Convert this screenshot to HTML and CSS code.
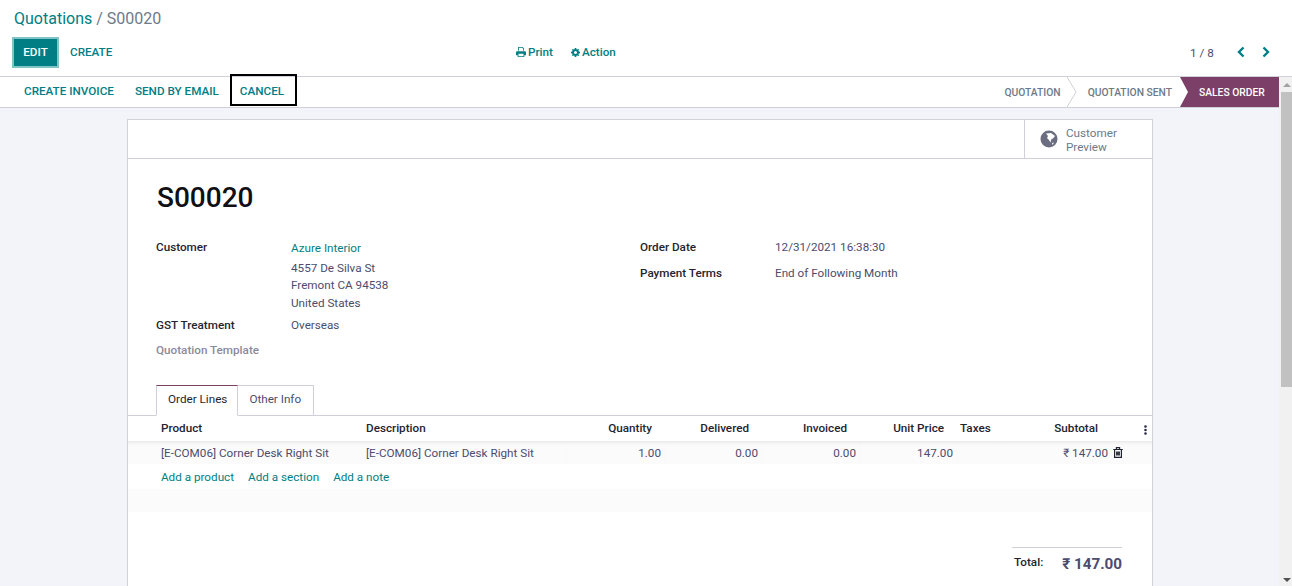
FILE: index.html
```html
<!DOCTYPE html>
<html lang="en">
<head>
    <meta charset="UTF-8">
    <title>Quotations / S00020</title>
    <link rel="stylesheet" href="styles.css">
</head>
<body>
    <header class="control-panel">
        <div class="breadcrumb"><a class="link">Quotations</a> <span class="crumb-sep">/</span> <span class="crumb-active">S00020</span></div>
        <div class="cp-row">
            <div class="cp-buttons">
                <button class="btn btn-primary">EDIT</button>
                <button class="btn btn-plain">CREATE</button>
            </div>
            <div class="cp-actions">
                <span class="cp-action">
                    <svg class="icon" viewBox="0 0 12 12" width="10" height="10"><path fill="#017e84" d="M2.500 0h5.500l1.500 1.500v3h-1V2.300L7.600 1H3.500v3.500h-1zM1.500 5h9A1.500 1.500 0 0 1 12 6.500V10h-2v2H2v-2H0V6.500A1.500 1.500 0 0 1 1.500 5zM3 8v3h6V8z"/></svg>
                    Print
                </span>
                <span class="cp-action">
                    <svg class="icon" viewBox="0 0 12 12" width="9" height="9"><path fill="#017e84" fill-rule="evenodd" d="M5 0h2l.3 1.600 1.100.5L9.800 1.200l1 1-.9 1.400.5 1.100L12 5v2l-1.600.3-.5 1.100.9 1.400-1 1-1.400-.9-1.100.5L7 12H5l-.3-1.600-1.100-.5-1.400.9-1-1 .9-1.400-.5-1.100L0 7V5l1.600-.3.500-1.100-.9-1.400 1-1 1.400.9 1.100-.5zM6 4a2 2 0 1 0 0 4 2 2 0 0 0 0-4z"/></svg>
                    Action
                </span>
            </div>
            <div class="pager">
                <span class="pager-count">1 / 8</span>
                <svg class="pager-arrow" viewBox="0 0 10 12" width="10" height="12"><path d="M7.500 1.500 3 6l4.500 4.500" /></svg>
                <svg class="pager-arrow" viewBox="0 0 10 12" width="10" height="12"><path d="M2.500 1.500 7 6l-4.500 4.500" /></svg>
            </div>
        </div>
    </header>

    <div class="workspace">
        <div class="main">
            <div class="statusbar">
                <div class="status-buttons">
                    <button class="btn-status">CREATE INVOICE</button>
                    <button class="btn-status">SEND BY EMAIL</button>
                    <button class="btn-status btn-focus">CANCEL</button>
                </div>
                <div class="stages">
                    <span class="stage stage-first">QUOTATION</span>
                    <span class="stage-chevron">
                        <svg viewBox="0 0 10 30" width="10" height="30"><path d="M0 0l9 15L0 30" fill="none" stroke="#cfd0d8"/></svg>
                    </span>
                    <span class="stage stage-sent">QUOTATION SENT</span>
                    <span class="stage stage-current">SALES ORDER</span>
                </div>
            </div>

            <div class="sheet-area">
                <div class="sheet">
                    <div class="button-box">
                        <div class="stat-button">
                            <svg class="globe" viewBox="0 0 18 18" width="18" height="18"><circle cx="9" cy="9" r="8.500" fill="#6b6d80"/><path fill="#fff" d="M6 3.500 11 3l4 3-2 2.500-1.500.5-1 3.500L9 10 7 8l1-2zM12 13l2-.5-1.500 2.500z"/></svg>
                            <span class="stat-text">Customer<br>Preview</span>
                        </div>
                    </div>

                    <h1 class="doc-name">S00020</h1>

                    <div class="form-groups">
                        <div class="form-col">
                            <div class="field">
                                <span class="field-label">Customer</span>
                                <div class="field-value">
                                    <a class="link customer-link">Azure Interior</a>
                                    <div class="address">4557 De Silva St<br>Fremont CA 94538<br>United States</div>
                                </div>
                            </div>
                            <div class="field field-gst">
                                <span class="field-label">GST Treatment</span>
                                <div class="field-value">Overseas</div>
                            </div>
                            <div class="field field-template">
                                <span class="field-label field-muted">Quotation Template</span>
                            </div>
                        </div>
                        <div class="form-col form-col-right">
                            <div class="field">
                                <span class="field-label">Order Date</span>
                                <div class="field-value">12/31/2021 16:38:30</div>
                            </div>
                            <div class="field field-terms">
                                <span class="field-label">Payment Terms</span>
                                <div class="field-value">End of Following Month</div>
                            </div>
                        </div>
                    </div>

                    <div class="tabs">
                        <span class="tab tab-active">Order Lines</span>
                        <span class="tab">Other Info</span>
                    </div>

                    <table class="lines">
                        <colgroup>
                            <col class="c-product"><col class="c-desc"><col class="c-qty"><col class="c-delivered"><col class="c-invoiced"><col class="c-price"><col class="c-taxes"><col class="c-sub"><col class="c-opt">
                        </colgroup>
                        <thead>
                            <tr>
                                <th>Product</th>
                                <th>Description</th>
                                <th class="num">Quantity</th>
                                <th class="num">Delivered</th>
                                <th class="num">Invoiced</th>
                                <th class="num">Unit Price</th>
                                <th class="th-taxes">Taxes</th>
                                <th class="num th-subtotal">Subtotal</th>
                                <th class="opt">
                                    <svg class="kebab" viewBox="0 0 3 10" width="3" height="10"><circle cx="1.500" cy="1.500" r="1.300"/><circle cx="1.500" cy="5" r="1.300"/><circle cx="1.500" cy="8.500" r="1.300"/></svg>
                                </th>
                            </tr>
                        </thead>
                        <tbody>
                            <tr class="line">
                                <td>[E-COM06] Corner Desk Right Sit</td>
                                <td>[E-COM06] Corner Desk Right Sit</td>
                                <td class="num">1.00</td>
                                <td class="num">0.00</td>
                                <td class="num">0.00</td>
                                <td class="num">147.00</td>
                                <td></td>
                                <td class="num">₹ 147.00</td>
                                <td class="opt">
                                    <svg class="trash" viewBox="0 0 10 11" width="10" height="11"><path fill="none" stroke="#1f2430" stroke-width="1.200" d="M1.600 2.500V10.400h6.800V2.500M.2 2.500h9.600M3.400 2.500V.7h3.200v1.800M3.700 4.500v4M5 4.500v4M6.300 4.500v4"/></svg>
                                </td>
                            </tr>
                            <tr class="add-row">
                                <td colspan="9"><a class="link">Add a product</a><a class="link">Add a section</a><a class="link">Add a note</a></td>
                            </tr>
                            <tr class="blank-row"><td colspan="9"></td></tr>
                        </tbody>
                    </table>

                    <div class="totals">
                        <div class="total-box">
                            <span class="total-label">Total:</span>
                            <span class="total-value">₹ 147.00</span>
                        </div>
                    </div>
                </div>
            </div>
        </div>

        <div class="scrollbar">
            <span class="scroll-arrow scroll-up"></span>
            <span class="scroll-thumb"></span>
            <span class="scroll-arrow scroll-down"></span>
        </div>
    </div>
</body>
</html>
```

FILE: styles.css
```css
* {
    box-sizing: border-box;
}

html, body {
    height: 100%;
    margin: 0;
    overflow: hidden;
}

body {
    display: flex;
    flex-direction: column;
    background-color: #fff;
    color: #4c4c6d;
    font-family: Roboto, "Liberation Sans", sans-serif;
    font-size: 11.700px;
}

.link {
    color: #017e84;
}

/* top panel */
.control-panel {
    height: 77px;
    flex: none;
    padding: 8px 0 0 12px;
    border-bottom: 1px solid #cfd0d8;
}

.breadcrumb {
    padding-left: 2px;
    font-size: 16px;
    line-height: 21px;
}

.crumb-sep, .crumb-active {
    color: #6c7a8a;
}

.cp-row {
    display: flex;
    align-items: center;
    margin-top: 8px;
}

.cp-buttons {
    display: flex;
    align-items: center;
    width: 498px;
    flex: none;
}

.btn {
    border: 0;
    padding-bottom: 2px;
    font-family: inherit;
    font-size: 11.700px;
    font-weight: 500;
}

.btn-primary {
    width: 47px;
    height: 31px;
    background-color: #017e84;
    border: 2px solid #7fc5c8;
    color: #fff;
}

.btn-plain {
    margin-left: 2px;
    padding: 0 9px 2px;
    background: none;
    color: #017e84;
}

.cp-actions {
    display: flex;
    flex: none;
    gap: 18px;
    margin-top: -1px;
    padding-left: 6px;
    width: 680px;
}

.cp-action {
    display: flex;
    align-items: center;
    gap: 2px;
    color: #017e84;
    font-weight: 500;
}

.pager {
    display: flex;
    flex: none;
    align-items: center;
}

.pager-count {
    margin-right: 7px;
    white-space: nowrap;
}

.pager-arrow {
    flex: none;
    margin: -1px 0 0 15px;
    fill: none;
    stroke: #017e84;
    stroke-width: 2.400;
}

/* below the panel */
.workspace {
    flex: 1;
    display: flex;
    min-height: 0;
}

.main {
    flex: 1;
    min-width: 0;
    display: flex;
    flex-direction: column;
    background-color: #f3f4fa;
}

.statusbar {
    flex: none;
    height: 31px;
    display: flex;
    justify-content: space-between;
    background-color: #fff;
    border-bottom: 1px solid #cfd0d8;
}

.status-buttons {
    display: flex;
    padding-left: 14px;
}

.btn-status {
    height: 32px;
    margin-top: -3px;
    padding: 2px 8px 0;
    background: none;
    border: 2px solid transparent;
    color: #017e84;
    font-family: inherit;
    font-size: 11.700px;
    font-weight: 500;
}

.btn-status + .btn-status {
    margin-left: 1px;
}

.btn-focus {
    width: 67px;
    border-color: #000;
    text-align: left;
}

.stages {
    display: flex;
    align-items: stretch;
}

.stage {
    display: flex;
    align-items: center;
    padding: 0 8px;
    color: #6c7a8a;
    font-size: 10.300px;
    font-weight: 500;
}

.stage-first {
    padding-right: 6px;
}

.stage-chevron {
    display: flex;
}

.stage-sent {
    padding-left: 11px;
}

.stage-current {
    width: 99px;
    padding-left: 19px;
    padding-right: 0;
    background-color: #7c3f67;
    clip-path: polygon(0 0, 100% 0, 100% 100%, 0 100%, 8px 50%);
    color: #fff;
}

.sheet-area {
    flex: 1;
    min-height: 0;
    overflow: hidden;
    padding: 11px 126px 0 127px;
}

.sheet {
    height: 600px;
    background-color: #fff;
    border: 1px solid #cfd0d8;
}

.button-box {
    display: flex;
    justify-content: flex-end;
    height: 39px;
    border-bottom: 1px solid #cfd0d8;
}

.stat-button {
    width: 128px;
    display: flex;
    align-items: center;
    padding-left: 15px;
    border-left: 1px solid #cfd0d8;
    color: #6c7a8a;
}

.stat-text {
    margin: 2px 0 0 8px;
    line-height: 14px;
}

.globe {
    flex: none;
}

.doc-name {
    margin: 22px 0 0 29px;
    color: #0f0f14;
    font-size: 28px;
    font-weight: 500;
    line-height: 34px;
}

.form-groups {
    display: flex;
    margin: 24px 0 0 28px;
}

.form-col {
    width: 484px;
}

.field {
    display: flex;
}

.field-label {
    width: 135px;
    flex: none;
    color: #1f2430;
    font-weight: 500;
    line-height: 17px;
}

.field-value {
    line-height: 17px;
}

.customer-link {
    display: block;
    padding-top: 1px;
}

.address {
    margin-top: 2.800px;
    line-height: 17.500px;
}

.field-gst {
    margin-top: 4.700px;
}

.field-template {
    margin-top: 8px;
}

.field-muted {
    width: auto;
    color: #8a8a9c;
}

.field-terms {
    margin-top: 9px;
}

.tabs {
    display: flex;
    margin: 26px 0 0 28px;
    height: 30px;
}

.tab {
    display: flex;
    align-items: center;
    height: 31px;
    padding: 0 12px 2px 11px;
    border: 1px solid #cfd0d8;
    border-left-width: 0;
}

.tab-active {
    padding-right: 10px;
    border-left-width: 1px;
    border-top-color: #7c3f67;
    border-bottom-color: #fff;
    color: #1f2430;
    position: relative;
    z-index: 1;
}

.lines {
    width: 100%;
    border-collapse: collapse;
    table-layout: fixed;
    border-top: 1px solid #cfd0d8;
}

.c-product { width: 234px; }
.c-desc { width: 204px; }
.c-qty { width: 99px; }
.c-delivered { width: 97px; }
.c-invoiced { width: 98px; }
.c-price { width: 97px; }
.c-taxes { width: 43px; }
.c-sub { width: 112px; }
.c-opt { width: 40px; }

.lines th {
    height: 26px;
    padding: 0 13px 2px 4px;
    color: #1f2430;
    font-weight: 500;
    text-align: left;
    white-space: nowrap;
    background-color: #fff;
}

.lines td {
    padding: 0 4px;
}

.lines th:first-child, .lines td:first-child {
    padding-left: 33px;
}

.lines .num {
    text-align: right;
}

.lines th.th-taxes {
    padding-left: 3px;
}

.lines th.th-subtotal {
    padding-right: 14px;
}

.lines th.opt {
    padding: 0 5px 0 0;
    text-align: right;
}

.kebab {
    display: inline-block;
    vertical-align: middle;
    fill: #2b2f45;
}

.lines .line td {
    height: 23px;
    background-color: #fbfbfc;
    box-shadow: inset 0 4px 4px -3px rgba(0, 0, 0, 0.10);
}

.lines .line td.opt {
    padding: 0 0 0 1px;
}

.trash {
    display: block;
}

.lines .add-row td {
    height: 25px;
    padding-left: 33px;
}

.add-row .link {
    margin-right: 14px;
}

.lines .blank-row td {
    height: 23px;
    background-color: #fbfbfc;
}

.totals {
    display: flex;
    justify-content: flex-end;
    padding: 35px 30px 0 0;
}

.total-box {
    width: 110px;
    display: flex;
    justify-content: space-between;
    align-items: center;
    padding: 7px 0 0 2px;
    border-top: 1px solid #cfd0d8;
}

.total-label {
    margin-bottom: 4px;
    color: #1f2430;
    font-weight: 500;
}

.total-value {
    font-size: 15.200px;
    font-weight: 700;
}

.scrollbar {
    width: 13px;
    flex: none;
    position: relative;
    background-color: #f1f1f1;
}

.scroll-thumb {
    position: absolute;
    top: 15px;
    left: 2px;
    width: 11px;
    height: 295px;
    background-color: #c1c1c1;
}

.scroll-arrow {
    position: absolute;
    left: 4px;
    border-left: 4px solid transparent;
    border-right: 4px solid transparent;
}

.scroll-up {
    top: 6px;
    border-bottom: 4px solid #a3a3a3;
}

.scroll-down {
    bottom: 4px;
    border-top: 4px solid #505050;
}
```
